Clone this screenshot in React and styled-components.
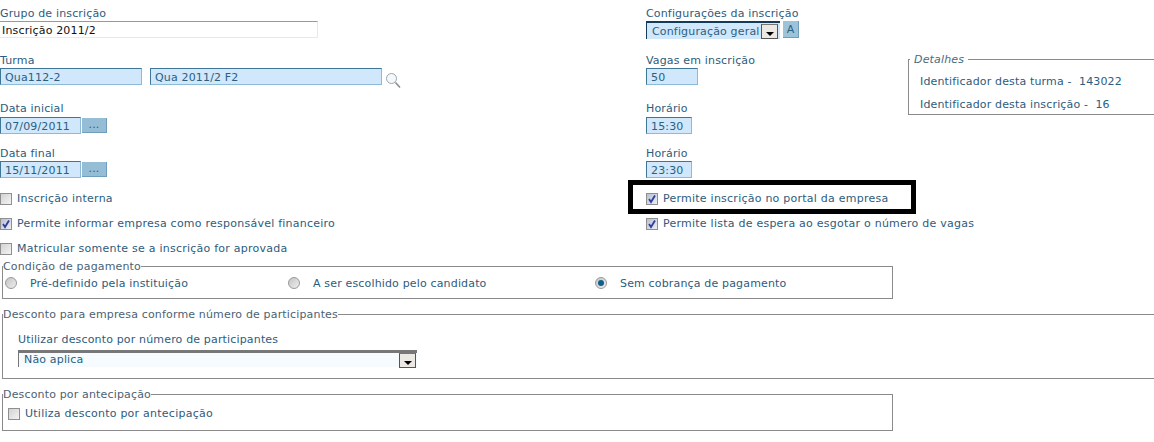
import React from 'react'
import styled, { createGlobalStyle } from 'styled-components'

const Global = createGlobalStyle`
	html, body {
		margin: 0;
		padding: 0;
		background: #fff;
		overflow: hidden;
	}
	body {
		font-family: "DejaVu Sans", Verdana, sans-serif;
		font-size: 11px;
		letter-spacing: 0.16px;
		color: #2d5c7c;
	}
`
const Page = styled.div`
	position: relative;
	width: 1154px;
	height: 442px;
	padding-top: 7px;
	box-sizing: border-box;
	overflow: hidden;
`
const TopGrid = styled.div`
	display: grid;
	grid-template-columns: 646px 262px 246px;
	grid-template-rows: 47px 48px 45px 39px 25px 25px 24px;
`
const Field = styled.div`
	display: flex;
	flex-direction: column;
	gap: ${(p) => p.$gap || 1}px;
	align-items: flex-start;
`
const Label = styled.label`
	display: block;
	height: 13px;
	line-height: 13px;
	white-space: nowrap;
`
const Row = styled.div`
	display: flex;
	align-items: flex-start;
	gap: ${(p) => p.$gap || 0}px;
`
const PlainInput = styled.div`
	box-sizing: border-box;
	width: ${(p) => p.$w}px;
	height: 17px;
	line-height: 17px;
	padding-left: 2px;
	color: #111;
	background: #fff;
	border: 1px solid #ece9e4;
	border-top-color: #999;
	border-left: none;
`
const BlueInput = styled.div`
	box-sizing: border-box;
	width: ${(p) => p.$w}px;
	height: 17px;
	line-height: 17px;
	padding-left: 4px;
	color: #2a6180;
	background: #d0e7fc;
	border: 1px solid #8bbbd6;
	border-top-color: #3f7596;
	border-left-color: #3f7596;
`
const DotsButton = styled.div`
	box-sizing: border-box;
	width: 25px;
	height: 15px;
	margin: 1px 0 0 1px;
	line-height: 13px;
	text-align: center;
	color: #2a6180;
	background: #96bdd6;
	border-bottom: 1px solid #6f9dba;
	border-right: 1px solid #6f9dba;
`
const SearchIcon = styled.svg`
	width: 16px;
	height: 17px;
	margin: 4px 0 0 -5px;
`
const ComboBox = styled.div`
	box-sizing: border-box;
	display: flex;
	align-items: center;
	justify-content: space-between;
	width: ${(p) => p.$w}px;
	height: ${(p) => p.$h}px;
	padding: 0 ${(p) => p.$right}px 0 ${(p) => p.$pad}px;
	color: #2a6180;
	background: ${(p) => p.$bg};
	border-top: ${(p) => p.$top}px solid ${(p) => p.$edge};
	border-left: 1px solid ${(p) => p.$edge};
	white-space: nowrap;
`
const ComboText = styled.span`
	position: relative;
	top: ${(p) => p.$nudge || 0}px;
`
const ArrowBox = styled.span`
	box-sizing: border-box;
	flex: none;
	display: flex;
	align-items: flex-end;
	justify-content: center;
	width: 17px;
	height: 15px;
	padding-bottom: 2px;
	background: #ece9e4;
	border: 1px solid #555;
	border-top-color: #777;
	&::after {
		content: '';
		border: 4px solid transparent;
		border-top: 4px solid #000;
		border-bottom: 0;
	}
`
const SquareButton = styled.div`
	box-sizing: border-box;
	width: 16px;
	height: 17px;
	line-height: 18px;
	text-align: center;
	color: #2a6180;
	background: #9cc3da;
	border-bottom: 1px solid #6f9dba;
	border-right: 1px solid #6f9dba;
`
const Details = styled.fieldset`
	grid-column: 3;
	grid-row: 2 / span 2;
	box-sizing: border-box;
	width: 260px;
	height: 62px;
	margin: -1px 0 0;
	padding: 0 0 0 11px;
	border: 1px solid #8a8a8a;
	border-radius: 0;
`
const DetailsLegend = styled.legend`
	padding: 0 4px;
	margin-left: -10px;
	font-style: italic;
	line-height: 13px;
	color: #4a6a80;
`
const DetailLine = styled.div`
	height: 23px;
	line-height: 23px;
	white-space: pre;
	&:first-of-type {
		margin-top: 4px;
	}
`
const CheckRow = styled.div`
	display: flex;
	align-items: center;
	gap: 5px;
	white-space: nowrap;
	height: 25px;
	letter-spacing: 0.24px;
`
const Box = styled.span`
	box-sizing: border-box;
	flex: none;
	display: block;
	width: 12px;
	height: 12px;
	border: 1px solid #8f8f8f;
	background: ${(p) =>
		p.$on ? 'linear-gradient(135deg, #b9bfd2, #eceef4)' : 'linear-gradient(135deg, #d2d2d2, #f4f4f4)'};
	svg {
		display: block;
	}
`
const Check = ({ checked }) => (
	<Box $on={checked}>
		{checked && (
			<svg width="10" height="10" viewBox="0 0 10 10">
				<path d="M2 5 L4 8 L8 1.5" fill="none" stroke="#2f3f9c" strokeWidth="1.8" />
			</svg>
		)}
	</Box>
)
const Group = styled.fieldset`
	box-sizing: border-box;
	width: ${(p) => p.$w}px;
	height: ${(p) => p.$h}px;
	margin: ${(p) => p.$mt}px 0 0 2px;
	padding: 0;
	border: 1px solid #8a8a8a;
	border-radius: 0;
`
const GroupLegend = styled.legend`
	padding: 0;
	margin-left: 0;
	line-height: 13px;
	color: #4c6273;
`
const RadioRow = styled.div`
	display: flex;
	align-items: center;
	height: 18px;
	padding: 1px 0 0 2px;
`
const RadioItem = styled.div`
	display: flex;
	align-items: center;
	gap: 13px;
	width: ${(p) => p.$w}px;
	white-space: nowrap;
`
const Radio = styled.span`
	box-sizing: border-box;
	flex: none;
	display: flex;
	align-items: center;
	justify-content: center;
	width: 12px;
	height: 12px;
	border-radius: 50%;
	border: 1px solid #999;
	background: linear-gradient(135deg, #c4c4c4, #efefef);
	&::after {
		content: '';
		display: ${(p) => (p.$on ? 'block' : 'none')};
		width: 6px;
		height: 6px;
		border-radius: 50%;
		background: #0d5f8e;
	}
`
const DiscountBody = styled.div`
	padding: 12px 0 0 15px;
`
const AntecipationBody = styled.div`
	padding-left: 5px;
`
const Highlight = styled.div`
	position: absolute;
	left: 628px;
	top: 180px;
	width: 278px;
	height: 24px;
	border: 5px solid #000;
	pointer-events: none;
`

const App = () => (
	<Page>
		<Global />
		<TopGrid>
			<Field>
				<Label>Grupo de inscrição</Label>
				<PlainInput $w={318}>Inscrição 2011/2</PlainInput>
			</Field>
			<Field>
				<Label>Configurações da inscrição</Label>
				<Row $gap={3}>
					<ComboBox $w={134} $h={18} $pad={5} $right={2} $bg="#d0e7fc" $top={2} $edge="#143c58">
						<ComboText>Configuração geral</ComboText>
						<ArrowBox />
					</ComboBox>
					<SquareButton>A</SquareButton>
				</Row>
			</Field>
			<div />

			<Field>
				<Label>Turma</Label>
				<Row $gap={8}>
					<BlueInput $w={142}>Qua112-2</BlueInput>
					<BlueInput $w={232}>Qua 2011/2 F2</BlueInput>
					<SearchIcon viewBox="0 0 16 17">
						<circle cx="6.5" cy="6.5" r="5" fill="#f4f8fa" stroke="#9aa6ad" strokeWidth="1" />
						<path d="M10.5 10.5 L15 15.5" stroke="#8a8f94" strokeWidth="1.6" />
					</SearchIcon>
				</Row>
			</Field>
			<Field>
				<Label>Vagas em inscrição</Label>
				<BlueInput $w={52}>50</BlueInput>
			</Field>
			<Details>
				<DetailsLegend>Detalhes</DetailsLegend>
				<DetailLine>Identificador desta turma -  143022</DetailLine>
				<DetailLine>Identificador desta inscrição -  16</DetailLine>
			</Details>

			<Field $gap={2}>
				<Label>Data inicial</Label>
				<Row>
					<BlueInput $w={81}>07/09/2011</BlueInput>
					<DotsButton>...</DotsButton>
				</Row>
			</Field>
			<Field $gap={2}>
				<Label>Horário</Label>
				<BlueInput $w={46}>15:30</BlueInput>
			</Field>

			<Field>
				<Label>Data final</Label>
				<Row>
					<BlueInput $w={81}>15/11/2011</BlueInput>
					<DotsButton>...</DotsButton>
				</Row>
			</Field>
			<Field>
				<Label>Horário</Label>
				<BlueInput $w={46}>23:30</BlueInput>
			</Field>
			<div />

			<CheckRow><Check />Inscrição interna</CheckRow>
			<CheckRow><Check checked />Permite inscrição no portal da empresa</CheckRow>
			<div />

			<CheckRow><Check checked />Permite informar empresa como responsável financeiro</CheckRow>
			<CheckRow><Check checked />Permite lista de espera ao esgotar o número de vagas</CheckRow>
			<div />

			<CheckRow><Check />Matricular somente se a inscrição for aprovada</CheckRow>
		</TopGrid>

		<Group $w={891} $h={39} $mt={0}>
			<GroupLegend>Condição de pagamento</GroupLegend>
			<RadioRow>
				<RadioItem $w={283}><Radio />Pré-definido pela instituição</RadioItem>
				<RadioItem $w={307}><Radio />A ser escolhido pelo candidato</RadioItem>
				<RadioItem $w={200}><Radio $on />Sem cobrança de pagamento</RadioItem>
			</RadioRow>
		</Group>

		<Group $w={1160} $h={71} $mt={9}>
			<GroupLegend>Desconto para empresa conforme número de participantes</GroupLegend>
			<DiscountBody>
				<Field $gap={4}>
					<Label>Utilizar desconto por número de participantes</Label>
					<ComboBox $w={399} $h={17} $pad={5} $right={1} $bg="#f5fbff" $top={3} $edge="#777">
						<ComboText $nudge={-1}>Não aplica</ComboText>
						<ArrowBox />
					</ComboBox>
				</Field>
			</DiscountBody>
		</Group>

		<Group $w={891} $h={43} $mt={9}>
			<GroupLegend>Desconto por antecipação</GroupLegend>
			<AntecipationBody>
				<CheckRow><Check />Utiliza desconto por antecipação</CheckRow>
			</AntecipationBody>
		</Group>

		<Highlight />
	</Page>
)

export default App
